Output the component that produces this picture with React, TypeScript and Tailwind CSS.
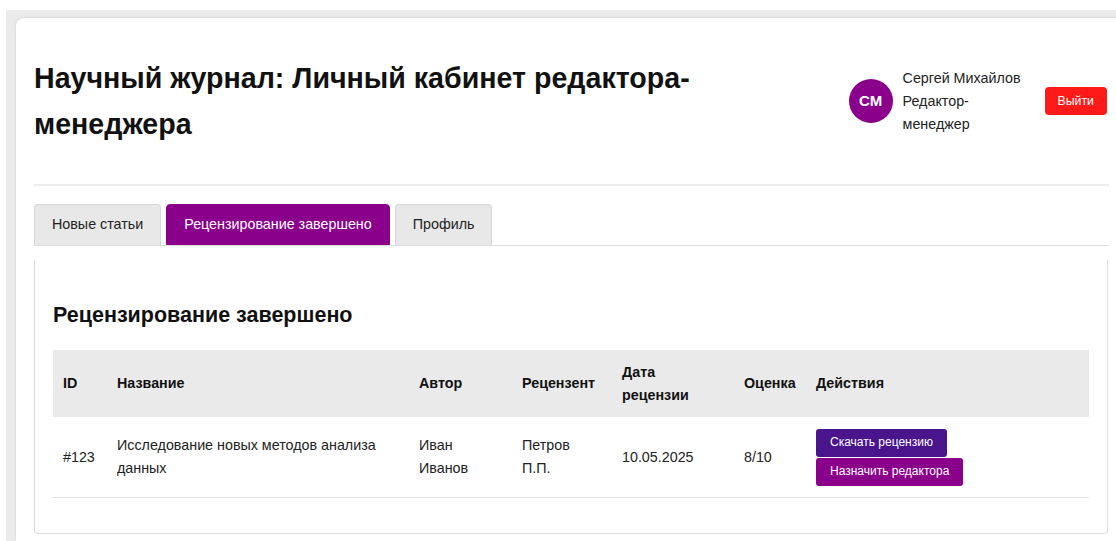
import React from 'react';

interface Review {
  id: string;
  title: string;
  author: string;
  reviewer: string;
  date: string;
  score: string;
}

const reviews: Review[] = [
  {
    id: '#123',
    title: 'Исследование новых методов анализа данных',
    author: 'Иван Иванов',
    reviewer: 'Петров П.П.',
    date: '10.05.2025',
    score: '8/10',
  },
];

const tabs = ['Новые статьи', 'Рецензирование завершено', 'Профиль'];

export default function App() {
  const active = 1;

  return (
    <div className="h-[541px] w-[1116px] overflow-hidden bg-white pt-[10px] pl-[6px] font-['Liberation_Sans',Arial,sans-serif] text-[#222]">
      <div className="h-full w-[1200px] bg-[#ebebeb] pt-[8px] pl-[10px]">
        <div className="h-full w-[1111px] rounded-tl-lg bg-white px-[18px] shadow-[0_0_3px_rgba(0,0,0,0.12)]">
          {/* header */}
          <div className="flex items-center justify-between border-b-2 border-[#eee] py-[37px]">
            <h1 className="max-w-[700px] text-[28.6px] leading-[46px] font-bold text-[#111]">
              Научный журнал: Личный кабинет редактора-менеджера
            </h1>
            <div className="flex items-center">
              <div className="flex h-[44px] w-[44px] items-center justify-center rounded-full bg-[#8b008b] text-[15px] font-bold text-white">
                СМ
              </div>
              <div className="ml-[10px] w-[122px] text-[14.3px] leading-[23px] text-[#222]">
                <div>Сергей Михайлов</div>
                <div>Редактор-менеджер</div>
              </div>
              <button className="ml-[20px] mr-[2px] h-[28px] rounded-[4px] bg-[#ff1a1a] px-[13px] text-[12.3px] text-white">
                Выйти
              </button>
            </div>
          </div>

          {/* tabs */}
          <div className="mt-[18px] flex gap-[5px] border-b border-[#ddd]">
            {tabs.map((t, i) => (
              <button
                key={t}
                className={
                  i === active
                    ? 'h-[41px] rounded-t-[4px] border border-[#8b008b] bg-[#8b008b] px-[17px] text-[14.3px] text-white'
                    : 'h-[41px] rounded-t-[4px] border border-b-0 border-[#d6d6d6] bg-[#e8e8e8] px-[17px] text-[14.3px] text-[#222]'
                }
              >
                {t}
              </button>
            ))}
          </div>

          {/* panel */}
          <div className="mt-[14px] mr-[1px] rounded-b-[4px] border-x border-b border-[#ddd] px-[18px] pt-[41px] pb-[35px]">
            <h2 className="mb-[21px] text-[21.5px] leading-[28px] font-bold text-[#111]">Рецензирование завершено</h2>
            <table className="w-full table-fixed border-collapse text-left text-[14.3px] leading-[23px]">
              <thead>
                <tr className="bg-[#eaeaea] text-[#111]">
                  <th className="w-[54px] px-[10px] py-[10.5px] font-bold">ID</th>
                  <th className="w-[302px] px-[10px] py-[10.5px] font-bold">Название</th>
                  <th className="w-[103px] px-[10px] py-[10.5px] font-bold">Автор</th>
                  <th className="w-[100px] px-[10px] py-[10.5px] font-bold">Рецензент</th>
                  <th className="w-[122px] px-[10px] py-[10.5px] font-bold">
                    <div className="w-[80px]">Дата рецензии</div>
                  </th>
                  <th className="w-[72px] px-[10px] py-[10.5px] font-bold">Оценка</th>
                  <th className="px-[10px] py-[10.5px] font-bold">Действия</th>
                </tr>
              </thead>
              <tbody>
                {reviews.map(r => (
                  <tr key={r.id} className="border-b border-[#ddd]">
                    <td className="px-[10px] py-[11.5px]">{r.id}</td>
                    <td className="px-[10px] py-[11.5px]">{r.title}</td>
                    <td className="px-[10px] py-[11.5px]">{r.author}</td>
                    <td className="px-[10px] py-[11.5px]">
                      <div className="w-[70px]">{r.reviewer}</div>
                    </td>
                    <td className="px-[10px] py-[11.5px]">{r.date}</td>
                    <td className="px-[10px] py-[11.5px]">{r.score}</td>
                    <td className="px-[10px] py-[11.5px]">
                      <div className="flex flex-col items-start gap-px">
                        <button className="h-[28px] rounded-[3px] bg-[#4a148c] px-[14px] text-[12px] text-white">
                          Скачать рецензию
                        </button>
                        <button className="h-[28px] rounded-[3px] bg-[#8b008b] px-[14px] text-[12px] text-white">
                          Назначить редактора
                        </button>
                      </div>
                    </td>
                  </tr>
                ))}
              </tbody>
            </table>
          </div>
        </div>
      </div>
    </div>
  );
}
